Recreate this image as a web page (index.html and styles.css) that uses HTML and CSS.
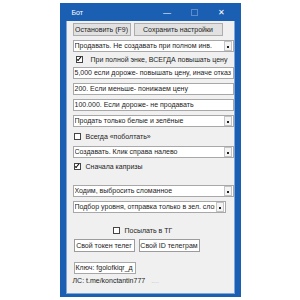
FILE: index.html
```html
<!DOCTYPE html>
<html lang="ru">
<head>
    <meta charset="UTF-8">
    <title>Бот</title>
    <link rel="stylesheet" href="styles.css">
</head>
<body>
    <div class="window">
        <div class="titlebar">
            <span class="title">Бот</span>
            <span class="ctl ctl-min">&#8212;</span>
            <span class="ctl ctl-max"></span>
            <span class="ctl ctl-close">&#10005;</span>
        </div>
        <div class="client">
            <div class="btn-row">
                <div class="btn btn-stop">Остановить (F9)</div>
                <div class="btn btn-save">Сохранить настройки</div>
            </div>

            <div class="combo mt4">
                <span class="val">Продавать. Не создавать при полном инв.</span>
                <span class="arrow"></span>
            </div>
            <div class="check check-a">
                <span class="box on"></span>
                <span>При полной энке, ВСЕГДА повышать цену</span>
            </div>
            <div class="edit mt4">5,000 если дороже- повышать цену, иначе отказ</div>
            <div class="edit mt4">200. Если меньше- понижаем цену</div>
            <div class="edit mt4">100.000. Если дороже- не продавать</div>
            <div class="combo mt4">
                <span class="val">Продать только белые и зелёные</span>
                <span class="arrow"></span>
            </div>
            <div class="check check-b">
                <span class="box"></span>
                <span>Всегда «поболтать»</span>
            </div>
            <div class="combo mt6">
                <span class="val">Создавать. Клик справа налево</span>
                <span class="arrow"></span>
            </div>
            <div class="check check-c">
                <span class="box on"></span>
                <span>Сначала капризы</span>
            </div>

            <div class="combo mt15">
                <span class="val">Ходим, выбросить сломанное</span>
                <span class="arrow"></span>
            </div>
            <div class="combo combo-short mt4">
                <span class="val">Подбор уровня, отправка только в зел. слоя</span>
                <span class="arrow"></span>
            </div>

            <div class="check check-tg">
                <span class="box"></span>
                <span>Посылать в ТГ</span>
            </div>
            <div class="btn-row tg-row">
                <div class="btn btn-tg">Свой токен телег</div>
                <div class="btn btn-tg">Свой ID телеграм</div>
            </div>
            <div class="edit edit-key">Ключ: fgolofkiqr_д</div>
            <div class="footer">ЛС: t.me/konctantin777 <span class="dots">....</span></div>
        </div>
    </div>
</body>
</html>
```

FILE: styles.css
```css
body {
    margin: 0;
    background: #ffffff;
    font-family: "Liberation Sans", Arial, sans-serif;
    font-size: 7px;
    color: #1c1c1c;
}

.window {
    width: 169px;
    height: 291px;
    margin: 3px auto 0;
    padding: 0 6px 3px;
    background: #1b5fb3;
    display: flex;
    flex-direction: column;
}

.titlebar {
    height: 18px;
    flex-shrink: 0;
    display: flex;
    align-items: center;
    color: #ffffff;
}

.title {
    margin-left: 6px;
    font-size: 7px;
    flex: 1;
}

.ctl {
    display: flex;
    justify-content: center;
    align-items: center;
    width: 27px;
    font-size: 8px;
}

.ctl-max::before {
    content: "";
    width: 5px;
    height: 5px;
    border: 1px solid #5d8ccb;
}

.client {
    flex: 1;
    min-height: 0;
    background: #f0f0f0;
    padding: 2px 0 0 6px;
    display: flex;
    flex-direction: column;
    align-items: flex-start;
    border: 1px solid #7ea6da;
    border-top: none;
}

.client > * {
    flex-shrink: 0;
}

.btn-row {
    display: flex;
    gap: 3px;
}

.btn {
    height: 11px;
    line-height: 11px;
    border: 1px solid #adadad;
    background: #e1e1e1;
    text-align: center;
    white-space: nowrap;
    overflow: hidden;
}

.btn-stop { width: 56px; }
.btn-save { width: 87px; }

.combo, .edit {
    width: 158px;
    height: 10px;
    line-height: 10px;
    border: 1px solid #a8a8a8;
    background: #ffffff;
    padding-left: 1px;
    display: flex;
    white-space: nowrap;
    overflow: hidden;
}

.combo .val {
    flex: 1;
    overflow: hidden;
}

.arrow {
    flex-shrink: 0;
    width: 6px;
    height: 8px;
    margin: 0 1px 0 1px;
    align-self: center;
    border: 1px solid #c4c4c4;
    background: #f4f4f4;
    display: flex;
    justify-content: center;
    align-items: flex-end;
}

.arrow::before {
    content: "";
    width: 2px;
    height: 2px;
    margin-bottom: 2px;
    background: #222;
}

.combo-short { width: 150px; }

.mt4 { margin-top: 4px; }
.mt6 { margin-top: 6px; }
.mt15 { margin-top: 15px; }

.check {
    display: flex;
    align-items: center;
    height: 8px;
    white-space: nowrap;
}

.box {
    width: 5px;
    height: 5px;
    border: 1px solid #444;
    background: #ffffff;
    margin-right: 5px;
    position: relative;
}

.box.on::after {
    content: "";
    position: absolute;
    left: 1px;
    top: -1px;
    width: 1px;
    height: 4px;
    border: solid #111;
    border-width: 0 1px 1px 0;
    transform: rotate(40deg);
}

.check-a { margin: 3px 0 0 3px; }
.check-a .box { margin-right: 8px; }
.check-b { margin: 5px 0 0 1px; }
.check-c { margin: 4px 0 0 1px; }
.check-tg { margin: 13px 0 0 40px; }

.tg-row {
    margin: 5px 0 0 1px;
    gap: 4px;
}

.btn-tg {
    width: 59px;
    background: #ffffff;
    border-color: #9c9c9c;
}

.edit-key {
    width: 59px;
    margin: 10px 0 0 1px;
}

.footer {
    margin-top: 3px;
    line-height: 8px;
    white-space: nowrap;
}

.dots {
    color: #c0c0c0;
    margin-left: 4px;
}
```
